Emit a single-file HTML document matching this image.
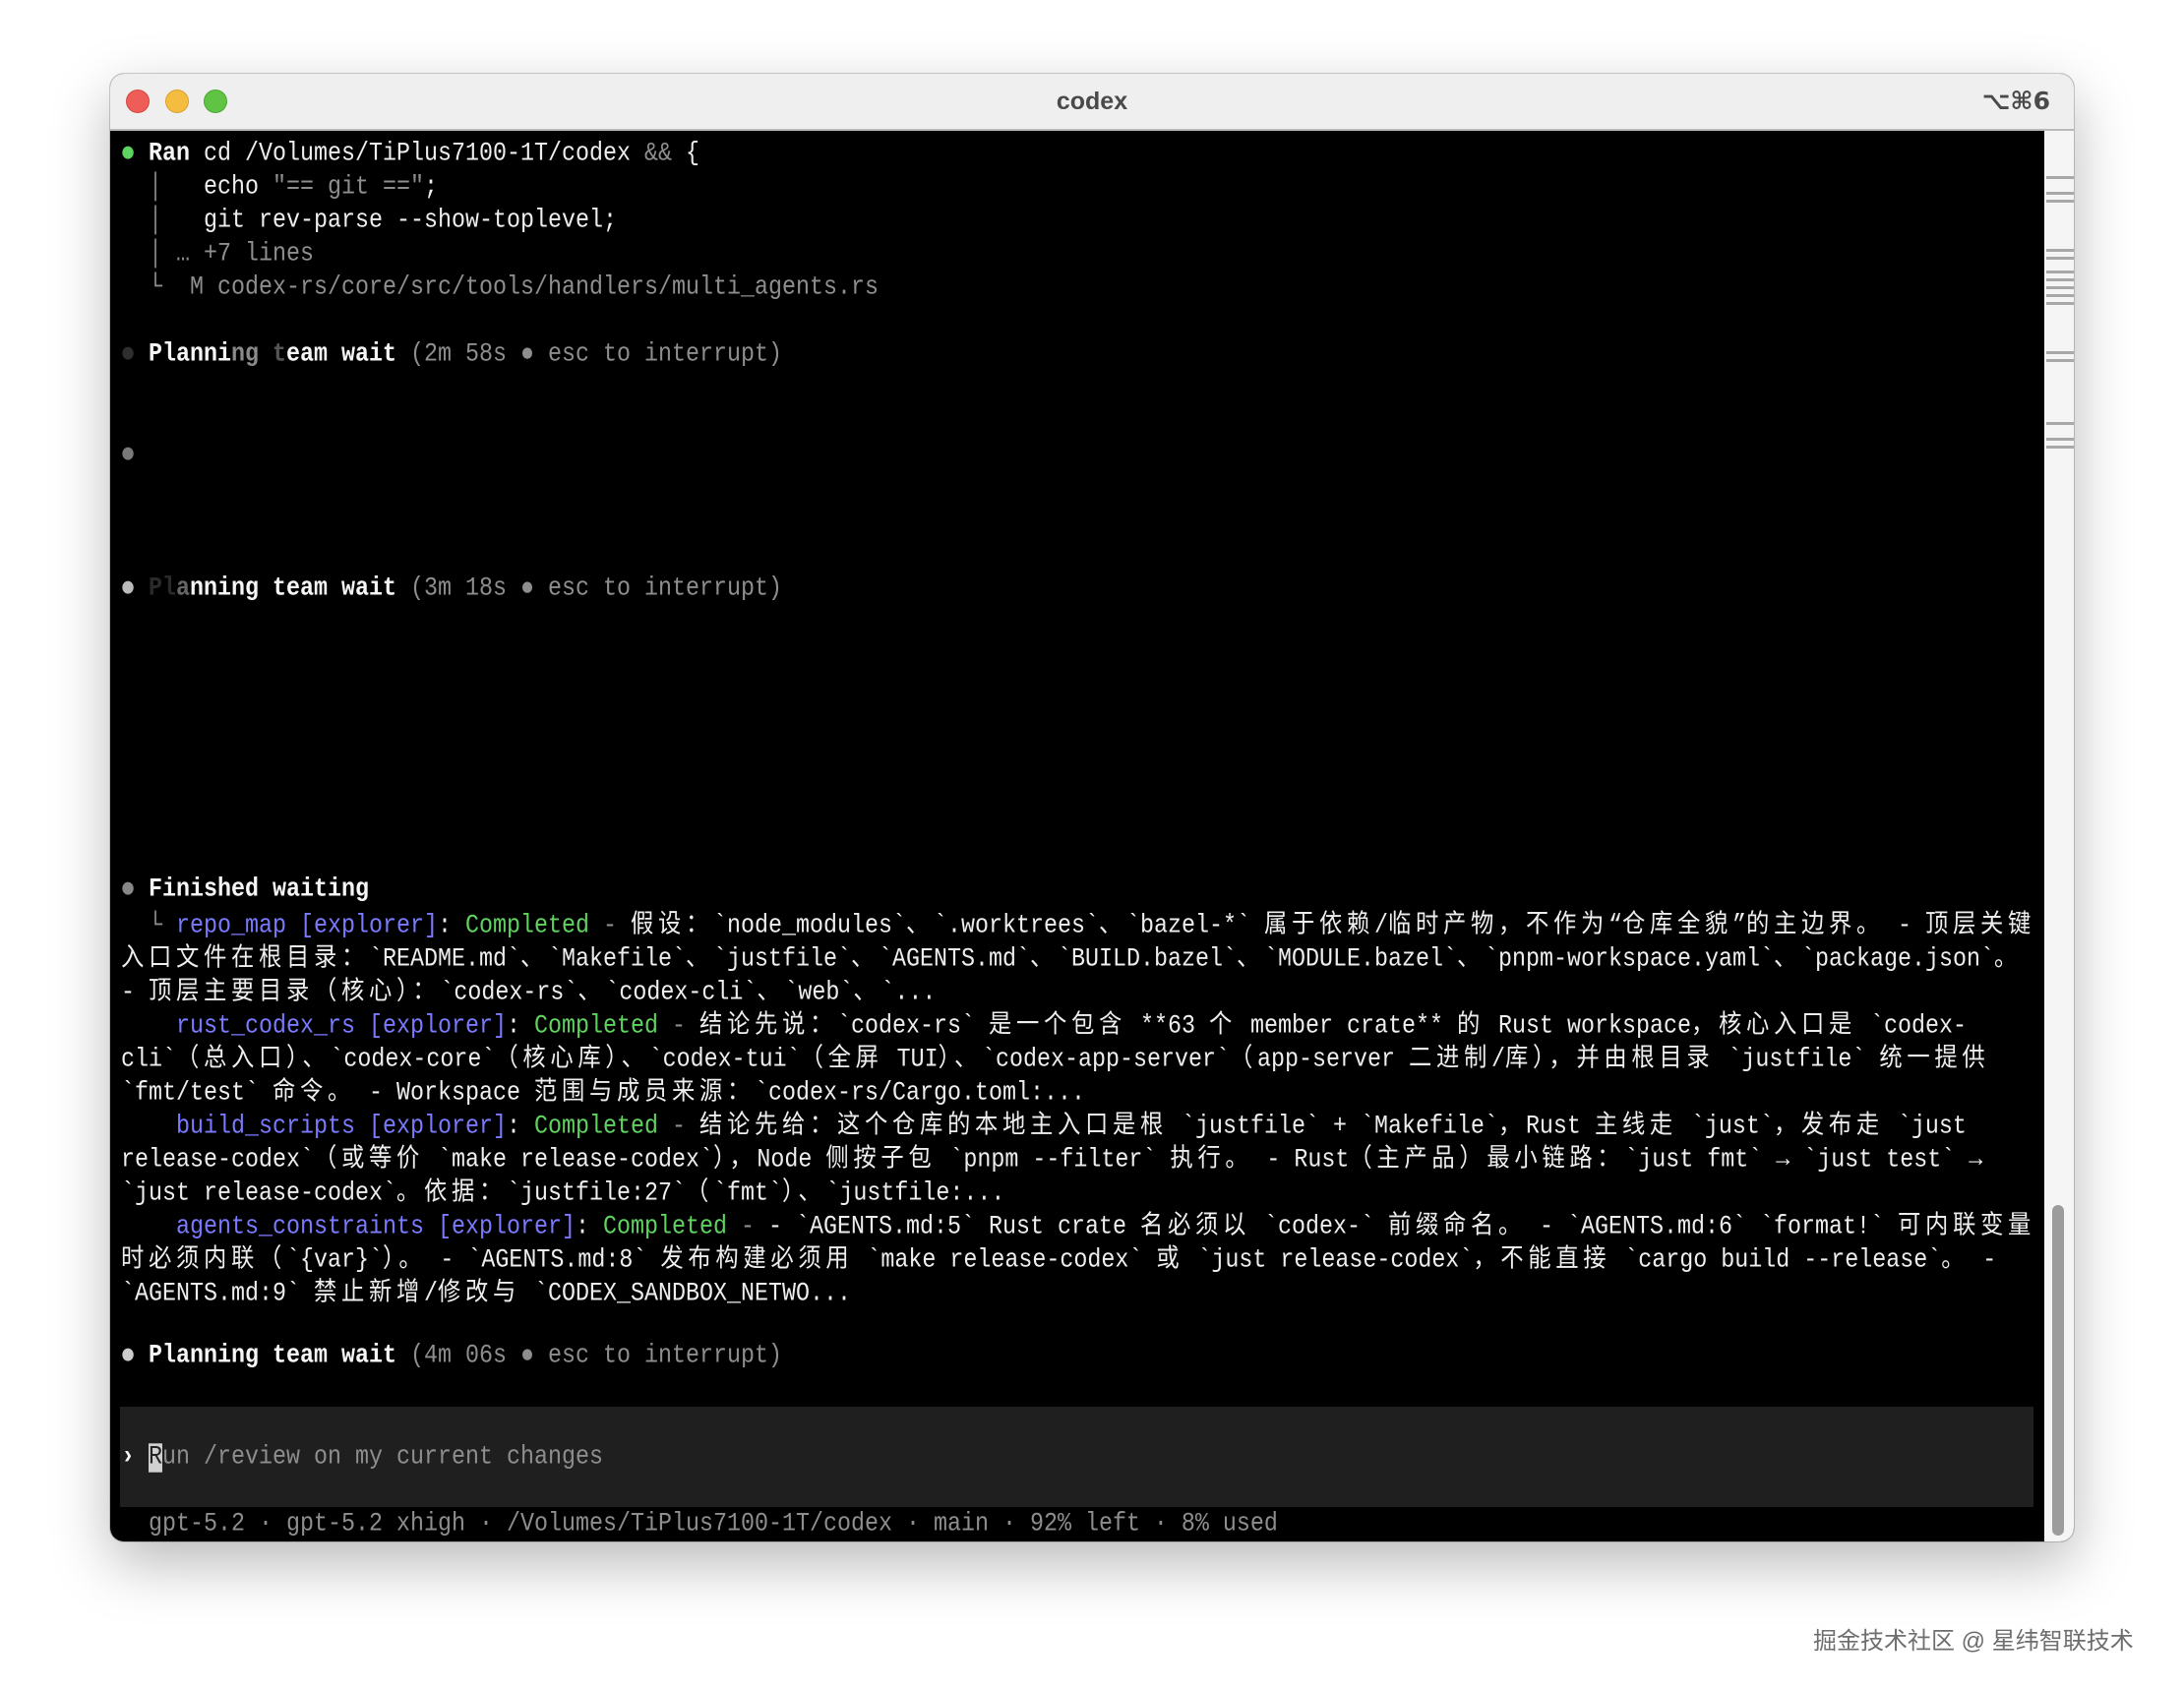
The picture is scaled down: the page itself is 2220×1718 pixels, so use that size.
<!DOCTYPE html>
<html><head><meta charset="utf-8">
<style>
html,body{margin:0;padding:0;background:#fff;width:2220px;height:1718px;overflow:hidden;position:relative}
.win{position:absolute;left:112px;top:75px;width:1996px;height:1492px;border-radius:14px;overflow:hidden;box-shadow:0 22px 60px rgba(0,0,0,.28),0 0 0 1px rgba(0,0,0,.18);background:#000}
.tb{position:absolute;left:0;top:0;width:100%;height:58px;background:#efeff0;border-bottom:2px solid #b9b9b9;box-sizing:border-box}
.tl{position:absolute;top:16px;width:24px;height:24px;border-radius:50%}
.title{position:absolute;left:0;right:0;top:14px;text-align:center;font:bold 25px "Liberation Sans",sans-serif;color:#4a4a4a}
.kbd{position:absolute;right:24px;top:13px;font:bold 25px "DejaVu Sans","Liberation Sans",sans-serif;color:#4a4a4a}
.sb{position:absolute;left:1966px;top:58px;width:30px;height:1434px;background:#f5f5f5}
.mk{position:absolute;left:2px;width:28px;height:3px;background:#a8a8a8}
.thumb{position:absolute;left:8px;top:1092px;width:12px;height:336px;border-radius:6px;background:#9c9c9c}
.term{position:absolute;left:0;top:58px;width:1966px;height:1434px;overflow:hidden}
.r{position:absolute;left:11px;height:34px;line-height:34px;white-space:pre;font-family:"Liberation Mono","DejaVu Sans Mono",monospace;font-size:23.33px;color:#eeeeee;transform:scaleY(1.13);transform-origin:0 50%}
i{font-style:normal;font-family:"Noto Sans CJK SC","WenQuanYi Zen Hei",sans-serif;letter-spacing:4.67px}
.d{color:#8e8e8e}.b{font-weight:bold;color:#f6f6f6}.u{color:#7a7aff}.g{color:#5fd35f}
.o{display:inline-block;width:14px;text-align:center;font-family:"DejaVu Sans",sans-serif;font-size:15px;vertical-align:top;position:relative;top:-3px}
.gd{color:#5fd35f}
.inp{position:absolute;left:10px;top:1297px;width:1945px;height:102px;background:#1f1f1f}
.cur{background:#d0d0d0;color:#222}
.wm{position:absolute;left:1843px;top:1648px;font:24px "Liberation Sans","Noto Sans CJK SC",sans-serif;color:#6e6e6e}
</style></head><body>
<div class="win">
 <div class="tb">
  <div class="tl" style="left:16px;background:#ee5d57;border:1px solid #d44a44;box-sizing:border-box"></div>
  <div class="tl" style="left:56px;background:#f5bd3f;border:1px solid #d9a032;box-sizing:border-box"></div>
  <div class="tl" style="left:95px;background:#5fc443;border:1px solid #4aa834;box-sizing:border-box"></div>
  <div class="title">codex</div>
  <div class="kbd">⌥⌘6</div>
 </div>
 <div class="term">
  <div class="inp"></div>
  <div class="r" style="top:7px"><span class="o gd">●</span> <span class="b">Ran</span> cd /Volumes/TiPlus7100-1T/codex <span class="d">&amp;&amp;</span> {</div>
  <div class="r" style="top:41px"><span class="d">  │</span>   echo <span class="d">"== git =="</span>;</div>
  <div class="r" style="top:75px"><span class="d">  │</span>   git rev-parse --show-toplevel;</div>
  <div class="r d" style="top:109px">  │ … +7 lines</div>
  <div class="r d" style="top:143px">  └  M codex-rs/core/src/tools/handlers/multi_agents.rs</div>
  <div class="r" style="top:211px"><span class="o" style="color:#2e2e2e">●</span> <span class="b">Planni</span><span class="b" style="color:#8a8a8a">ng</span> <span class="b" style="color:#555">t</span><span class="b">eam wait</span> <span class="d">(2m 58s ● esc to interrupt)</span></div>
  <div class="r" style="top:313px"><span class="o" style="color:#7a7a7a">●</span></div>
  <div class="r" style="top:449px"><span class="o" style="color:#bbb">●</span> <span class="b" style="color:#2a2a2a">Pl</span><span class="b" style="color:#666">a</span><span class="b">nning team wait</span> <span class="d">(3m 18s ● esc to interrupt)</span></div>
  <div class="r" style="top:755px"><span class="o" style="color:#888">●</span> <span class="b">Finished waiting</span></div>
  <div class="r" style="top:786px"><span class="d">  └</span> <span class="u">repo_map [explorer]</span>: <span class="g">Completed</span> <span class="d">-</span> <i>假设：</i>`node_modules`<i>、</i>`.worktrees`<i>、</i>`bazel-*` <i>属于依赖</i>/<i>临时产物，不作为</i>“<i>仓库全貌</i>”<i>的主边界。</i> - <i>顶层关键</i></div>
  <div class="r" style="top:820px"><i>入口文件在根目录：</i>`README.md`<i>、</i>`Makefile`<i>、</i>`justfile`<i>、</i>`AGENTS.md`<i>、</i>`BUILD.bazel`<i>、</i>`MODULE.bazel`<i>、</i>`pnpm-workspace.yaml`<i>、</i>`package.json`<i>。</i></div>
  <div class="r" style="top:854px">- <i>顶层主要目录（核心）：</i>`codex-rs`<i>、</i>`codex-cli`<i>、</i>`web`<i>、</i>`...</div>
  <div class="r" style="top:888px">    <span class="u">rust_codex_rs [explorer]</span>: <span class="g">Completed</span> <span class="d">-</span> <i>结论先说：</i>`codex-rs` <i>是一个包含</i> **63 <i>个</i> member crate** <i>的</i> Rust workspace<i>，核心入口是</i> `codex-</div>
  <div class="r" style="top:922px">cli`<i>（总入口）、</i>`codex-core`<i>（核心库）、</i>`codex-tui`<i>（全屏</i> TUI<i>）、</i>`codex-app-server`<i>（</i>app-server <i>二进制</i>/<i>库），并由根目录</i> `justfile` <i>统一提供</i></div>
  <div class="r" style="top:956px">`fmt/test` <i>命令。</i> - Workspace <i>范围与成员来源：</i>`codex-rs/Cargo.toml:...</div>
  <div class="r" style="top:990px">    <span class="u">build_scripts [explorer]</span>: <span class="g">Completed</span> <span class="d">-</span> <i>结论先给：这个仓库的本地主入口是根</i> `justfile` + `Makefile`<i>，</i>Rust <i>主线走</i> `just`<i>，发布走</i> `just</div>
  <div class="r" style="top:1024px">release-codex`<i>（或等价</i> `make release-codex`<i>），</i>Node <i>侧按子包</i> `pnpm --filter` <i>执行。</i> - Rust<i>（主产品）最小链路：</i>`just fmt` → `just test` →</div>
  <div class="r" style="top:1058px">`just release-codex`<i>。依据：</i>`justfile:27`<i>（</i>`fmt`<i>）、</i>`justfile:...</div>
  <div class="r" style="top:1092px">    <span class="u">agents_constraints [explorer]</span>: <span class="g">Completed</span> <span class="d">-</span> - `AGENTS.md:5` Rust crate <i>名必须以</i> `codex-` <i>前缀命名。</i> - `AGENTS.md:6` `format!` <i>可内联变量</i></div>
  <div class="r" style="top:1126px"><i>时必须内联（</i>`{var}`<i>）。</i> - `AGENTS.md:8` <i>发布构建必须用</i> `make release-codex` <i>或</i> `just release-codex`<i>，不能直接</i> `cargo build --release`<i>。</i> -</div>
  <div class="r" style="top:1160px">`AGENTS.md:9` <i>禁止新增</i>/<i>修改与</i> `CODEX_SANDBOX_NETWO...</div>
  <div class="r" style="top:1229px"><span class="o" style="color:#ccc">●</span> <span class="b">Planning team wait</span> <span class="d">(4m 06s ● esc to interrupt)</span></div>
  <div class="r" style="top:1332px"><span class="b">›</span> <span class="cur">R</span><span class="d">un /review on my current changes</span></div>
  <div class="r d" style="top:1400px">  gpt-5.2 · gpt-5.2 xhigh · /Volumes/TiPlus7100-1T/codex · main · 92% left · 8% used</div>
 </div>
 <div class="sb">
  <div class="mk" style="top:46px"></div>
  <div class="mk" style="top:62px"></div>
  <div class="mk" style="top:70px"></div>
  <div class="mk" style="top:120px"></div>
  <div class="mk" style="top:128px"></div>
  <div class="mk" style="top:142px"></div>
  <div class="mk" style="top:150px"></div>
  <div class="mk" style="top:158px"></div>
  <div class="mk" style="top:166px"></div>
  <div class="mk" style="top:174px"></div>
  <div class="mk" style="top:224px"></div>
  <div class="mk" style="top:232px"></div>
  <div class="mk" style="top:296px"></div>
  <div class="mk" style="top:312px"></div>
  <div class="mk" style="top:320px"></div>
  <div class="thumb"></div>
 </div>
</div>
<div class="wm">掘金技术社区 @ 星纬智联技术</div>
</body></html>
